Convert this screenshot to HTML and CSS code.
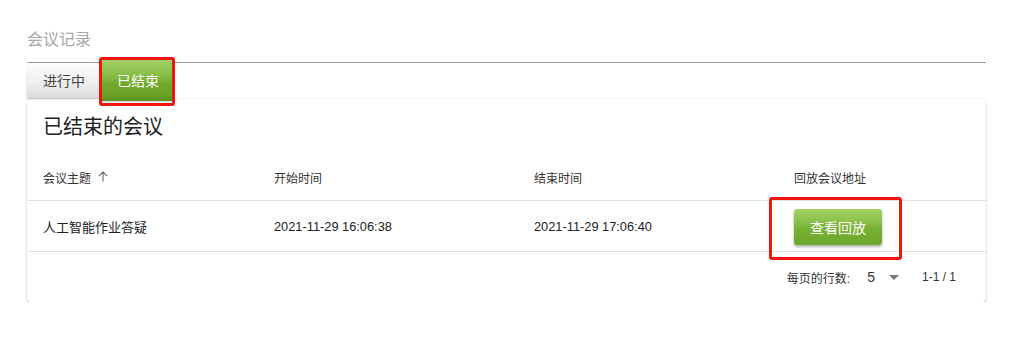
FILE: index.html
```html
<!DOCTYPE html>
<html lang="zh">
<head>
<meta charset="utf-8">
<link rel="stylesheet" href="styles.css">
</head>
<body>
<div class="page">
  <h2 class="page-title">会议记录</h2>
  <div class="tabs">
    <div class="tab">进行中</div>
    <div class="tab tab-active">已结束<span class="mark mark-tab"></span></div>
  </div>
  <div class="card">
    <div class="card-title">已结束的会议</div>
    <div class="row row-head">
      <div class="cell">会议主题<svg class="sort" width="10" height="11" viewBox="0 0 10 11"><path d="M5 10.5V1.2M0.8 5.2L5 1 9.2 5.2" fill="none" stroke="#666" stroke-width="1.1"/></svg></div>
      <div class="cell">开始时间</div>
      <div class="cell">结束时间</div>
      <div class="cell">回放会议地址</div>
    </div>
    <div class="row row-data">
      <div class="cell">人工智能作业答疑</div>
      <div class="cell num">2021-11-29 16:06:38</div>
      <div class="cell num">2021-11-29 17:06:40</div>
      <div class="cell"><button class="btn">查看回放<span class="mark mark-btn"></span></button></div>
    </div>
    <div class="footer">
      <span class="rpp">每页的行数:</span>
      <span class="sel">5<span class="caret"></span></span>
      <span class="range">1-1 / 1</span>
    </div>
  </div>
</div>
</body>
</html>
```
FILE: styles.css
```css
* { box-sizing: border-box; }
body {
  margin: 0;
  background: #fff;
  font-family: "Liberation Sans", Arial, "Noto Sans CJK SC", sans-serif;
  color: #333;
}
.page {
  padding: 30px 24px 0 27px;
}
.page-title {
  margin: 0;
  font-size: 16px;
  line-height: 20px;
  font-weight: normal;
  color: #a8a8a8;
  height: 20px;
}
.tabs {
  margin-top: 12px;
  border-top: 1px solid #9a9a9a;
  display: flex;
  align-items: flex-start;
  position: relative;
  z-index: 2;
  height: 38px;
}
.tab {
  position: relative;
  width: 72px;
  height: 34px;
  margin-top: 1px;
  padding-left: 16px;
  font-size: 14px;
  line-height: 34px;
  color: #444;
  background: linear-gradient(#fbfbfb 0%, #f0f0f0 50%, #dcdcdc 100%);
  border-top-left-radius: 7px;
  box-shadow: 0 1px 2px rgba(0,0,0,0.25);
}
.tab-active {
  width: 72px;
  height: 42px;
  margin-top: -4px;
  margin-left: 1px;
  padding-left: 17px;
  line-height: 44px;
  color: #fff;
  border-radius: 0;
  background: linear-gradient(#a3d165 0%, #86bd45 40%, #6fa82a 60%, #6aa126 88%, #5b8f1e 100%);
  box-shadow: 1px 1px 2px rgba(0,0,0,0.2);
}
.mark {
  position: absolute;
  border: 3px solid #f0140e;
  border-radius: 3px;
  pointer-events: none;
}
.mark-tab {
  top: -2px;
  left: -1px;
  right: -3px;
  bottom: -5px;
}
.card {
  position: relative;
  margin-top: -1px;
  background: #fff;
  border-radius: 4px;
  box-shadow: 0 2px 2px rgba(0,0,0,0.22), 0 0 2px rgba(0,0,0,0.14);
}
.card-title {
  height: 55px;
  padding: 15px 0 0 16px;
  font-size: 20px;
  line-height: 26px;
  color: #222;
}
.row {
  display: grid;
  grid-template-columns: 231px 260px 260px 1fr;
  padding-left: 16px;
  align-items: center;
  border-bottom: 1px solid #e0e0e0;
}
.row-head {
  height: 47px;
  font-size: 12px;
  color: #333;
}
.row-head .cell {
  display: flex;
  align-items: center;
}
.sort {
  margin-left: 7px;
  margin-top: -1px;
}
.row-data {
  height: 51px;
  font-size: 13px;
  color: #222;
}
.num { font-size: 12.8px; }
.btn {
  position: relative;
  width: 88px;
  height: 36px;
  margin-top: 1px;
  border: none;
  border-radius: 3px;
  font-family: inherit;
  font-size: 14px;
  color: #fff;
  background: linear-gradient(#a2d064 0%, #8cc24c 35%, #76b034 55%, #6ea82b 100%);
  box-shadow: 0 2px 3px rgba(0,0,0,0.3);
  cursor: pointer;
}
.mark-btn {
  top: -12px;
  left: -25px;
  right: -20px;
  bottom: -15px;
}
.footer {
  height: 50px;
  display: flex;
  align-items: center;
  justify-content: flex-end;
  padding-right: 30px;
  font-size: 12px;
  color: #333;
}
.sel {
  display: inline-flex;
  align-items: center;
  margin-left: 17px;
  font-size: 14px;
}
.caret {
  display: inline-block;
  margin-left: 14px;
  width: 0;
  height: 0;
  border-left: 5px solid transparent;
  border-right: 5px solid transparent;
  border-top: 5px solid #777;
}
.range { margin-left: 23px; }
```
